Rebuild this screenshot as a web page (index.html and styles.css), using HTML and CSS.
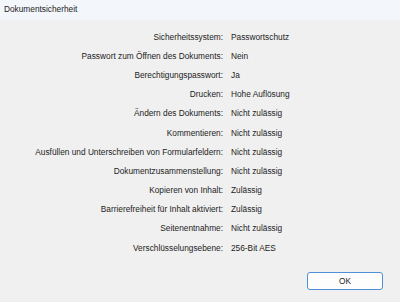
FILE: index.html
```html
<!DOCTYPE html>
<html lang="de">
<head>
    <meta charset="UTF-8">
    <title>Dokumentsicherheit</title>
    <link rel="stylesheet" href="styles.css">
</head>
<body>

    <div class="dialog">
        <div class="title-bar">Dokumentsicherheit</div>

        <div class="props">
            <div class="label">Sicherheitssystem:</div>
            <div class="value">Passwortschutz</div>

            <div class="label">Passwort zum Öffnen des Dokuments:</div>
            <div class="value">Nein</div>

            <div class="label">Berechtigungspasswort:</div>
            <div class="value">Ja</div>

            <div class="label">Drucken:</div>
            <div class="value">Hohe Auflösung</div>

            <div class="label">Ändern des Dokuments:</div>
            <div class="value">Nicht zulässig</div>

            <div class="label">Kommentieren:</div>
            <div class="value">Nicht zulässig</div>

            <div class="label">Ausfüllen und Unterschreiben von Formularfeldern:</div>
            <div class="value">Nicht zulässig</div>

            <div class="label">Dokumentzusammenstellung:</div>
            <div class="value">Nicht zulässig</div>

            <div class="label">Kopieren von Inhalt:</div>
            <div class="value">Zulässig</div>

            <div class="label">Barrierefreiheit für Inhalt aktiviert:</div>
            <div class="value">Zulässig</div>

            <div class="label">Seitenentnahme:</div>
            <div class="value">Nicht zulässig</div>

            <div class="label">Verschlüsselungsebene:</div>
            <div class="value">256-Bit AES</div>
        </div>

        <div class="footer">
            <button class="btn-ok">OK</button>
        </div>
    </div>

</body>
</html>
```

FILE: styles.css
```css
body {
    margin: 0;
    padding: 0;
    background-color: #f0f0f0;
    font-family: "Liberation Sans", Arial, sans-serif;
    font-size: 8.3px;
    color: #1c1c1c;
}

*,
*::before,
*::after {
    box-sizing: border-box;
}

.dialog {
    width: 400px;
    height: 302px;
    display: flex;
    flex-direction: column;
}

.title-bar {
    height: 20px;
    line-height: 19px;
    padding-left: 4px;
    background-color: #f3f6fa;
}

/* two columns, labels right aligned against the colon */
.props {
    display: grid;
    grid-template-columns: 223px 1fr;
    grid-auto-rows: 19.2px;
    column-gap: 8px;
    align-items: center;
    padding-top: 7px;
}

.label {
    text-align: right;
    white-space: nowrap;
}

.value {
    white-space: nowrap;
}

.footer {
    display: flex;
    justify-content: flex-end;
    padding-top: 14.6px;
    padding-right: 17px;
}

.btn-ok {
    width: 76px;
    height: 18px;
    padding: 0;
    font-family: inherit;
    font-size: 8.3px;
    color: #1c1c1c;
    background-color: #fdfdfd;
    border: 1px solid #4f8fd6;
    border-radius: 3px;
}
```
